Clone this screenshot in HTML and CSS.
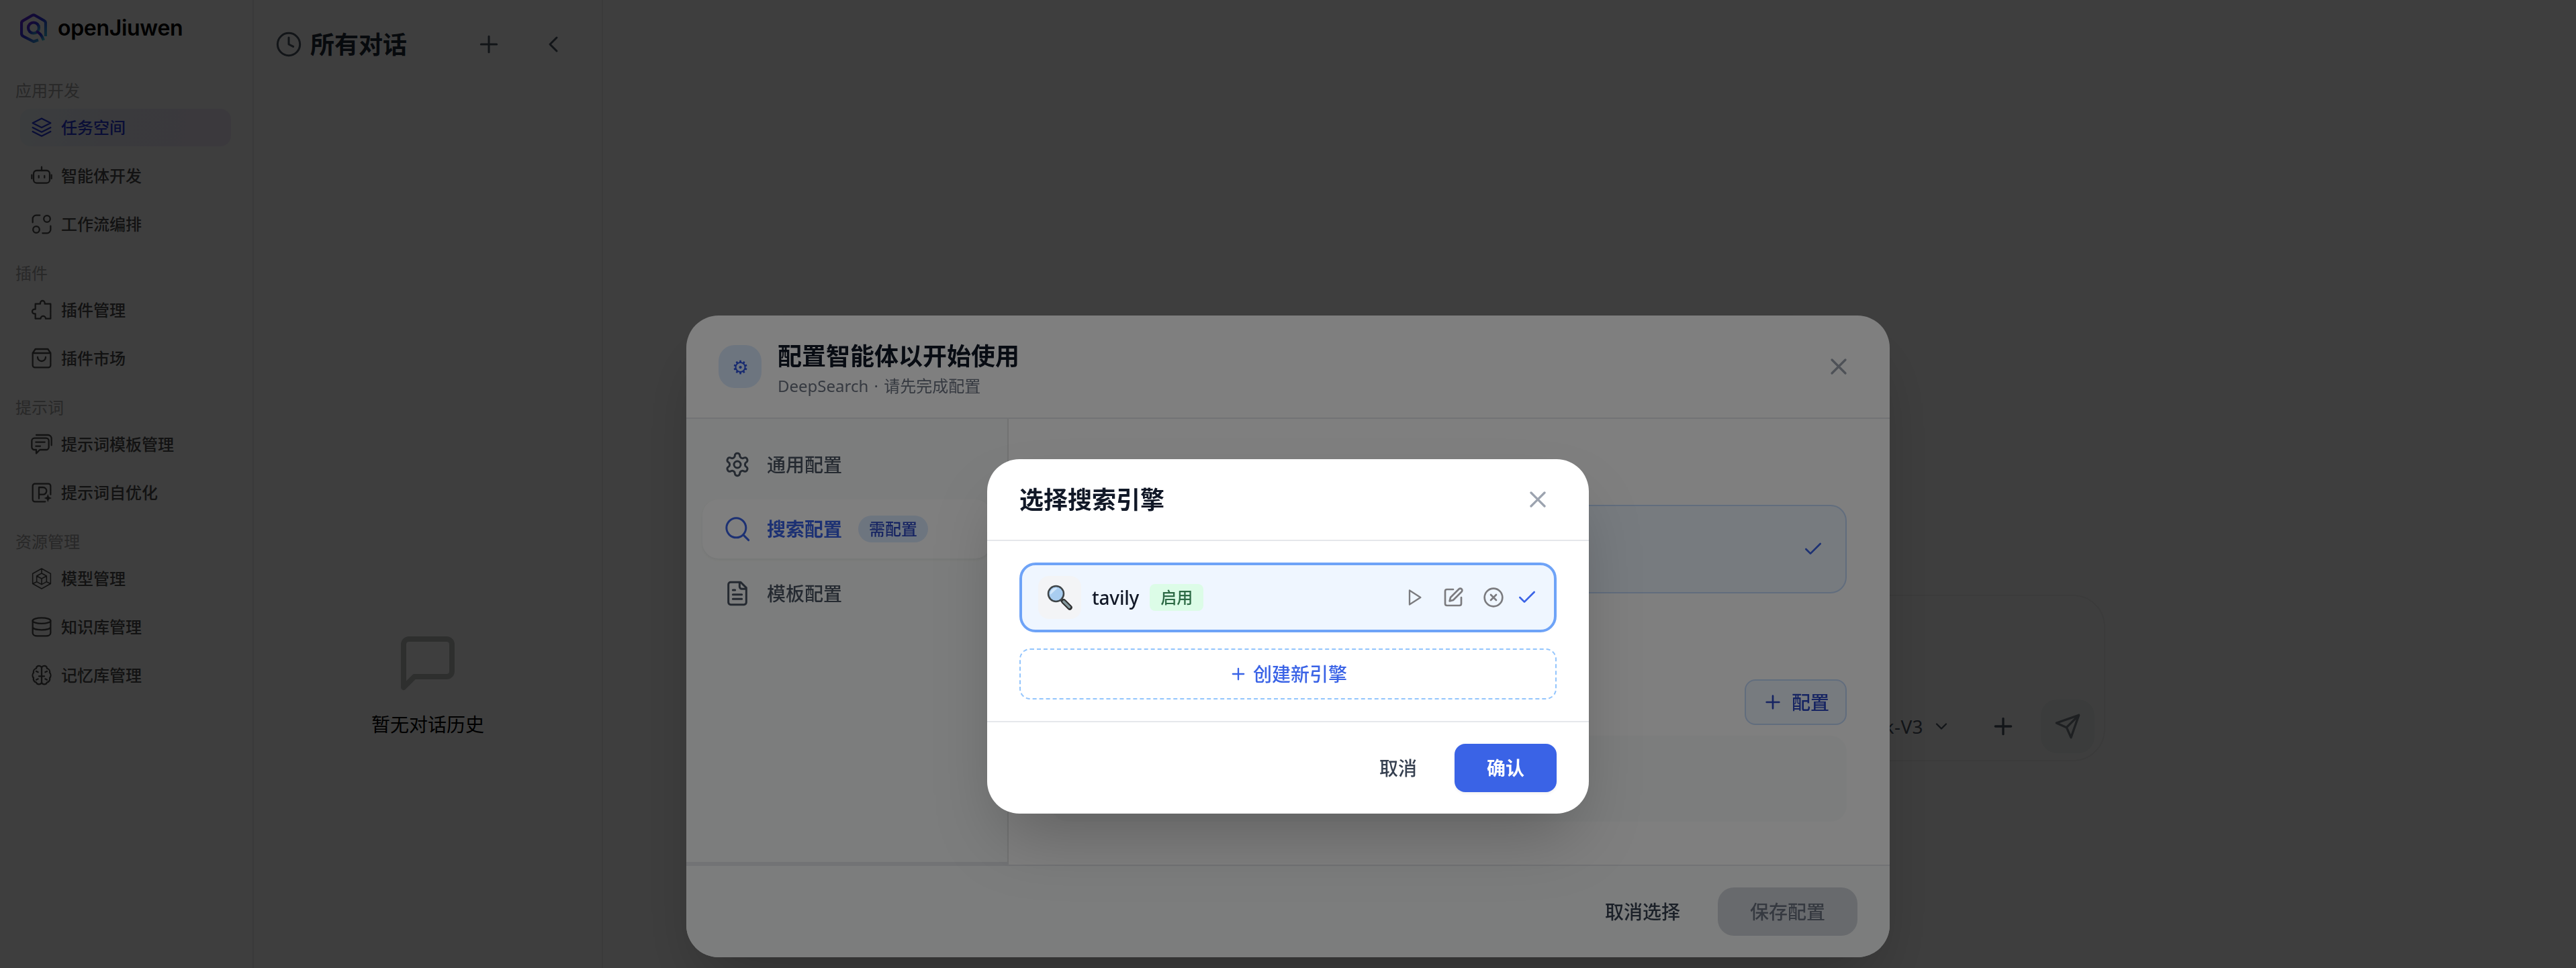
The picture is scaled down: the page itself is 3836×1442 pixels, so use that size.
FILE: index.html
```html
<!DOCTYPE html>
<html lang="zh-CN">
<head>
<meta charset="utf-8">
<title>openJiuwen</title>
<link rel="stylesheet" href="styles.css">
</head>
<body>
<svg class="sprite" aria-hidden="true">
  <defs>
    <linearGradient id="logo-fill" x1="0" y1="0" x2="1" y2="1">
      <stop offset="0" stop-color="#6a1fd8"/><stop offset=".5" stop-color="#2b35e0"/><stop offset="1" stop-color="#38d0d8"/>
    </linearGradient>
    <symbol id="plus" viewBox="0 0 24 24"><path d="M5 12h14M12 5v14"/></symbol>
    <symbol id="x" viewBox="0 0 24 24"><path d="M18 6 6 18M6 6l12 12"/></symbol>
    <symbol id="check" viewBox="0 0 24 24"><path d="M20 6 9 17l-5-5"/></symbol>
  </defs>
</svg>

<div class="app">
  <aside class="sidebar">
    <div class="brand">
      <svg class="logo" viewBox="0 0 40 44" fill="none" stroke="url(#logo-fill)" stroke-width="4.2" stroke-linejoin="round">
        <path d="M27 39.5 20 42 4.500 34Q2 32.500 2 30V14.500Q2 12 4.200 10.800L17.800 3Q20 1.800 22.200 3L35.800 10.800Q38 12 38 14.500V34"/>
        <circle cx="20" cy="21.500" r="8"/>
        <path d="M24 27Q31 29 35 40"/>
      </svg>
      <span class="brand-name">openJiuwen</span>
    </div>
    <nav class="menu">
      <h3 class="menu-label">应用开发</h3>
      <a class="menu-item active"><svg class="icon" viewBox="0 0 24 24"><path d="m12 1.800 10 5.200-10 5-10-5zM2 12l10 5 10-5M2 16.500l10 5 10-5"/></svg>任务空间</a>
      <a class="menu-item"><svg class="icon" viewBox="0 0 24 24"><rect x="3" y="6" width="18" height="14" rx="3.500"/><path d="M12 2v4M1 11v4M23 11v4M8.800 12v2M15.200 12v2"/></svg>智能体开发</a>
      <a class="menu-item"><svg class="icon" viewBox="0 0 24 24"><path d="M2 10V6a4 4 0 0 1 4-4h4M22 14v4a4 4 0 0 1-4 4h-5"/><circle cx="18" cy="6" r="3.600"/><circle cx="6" cy="18" r="3.600"/></svg>工作流编排</a>
      <h3 class="menu-label">插件</h3>
      <a class="menu-item"><svg class="icon" viewBox="0 0 24 24"><path d="M5 5h5.500V4a2.500 2.500 0 0 1 5 0v1H22v16.500h-5.500a2.800 2.800 0 0 0-5.600 0H5V16H4a2.500 2.500 0 0 1 0-5h1z"/></svg>插件管理</a>
      <a class="menu-item"><svg class="icon" viewBox="0 0 24 24"><path d="M5 1.500h14l3 4.500v13.500a2.500 2.500 0 0 1-2.500 2.500h-15A2.500 2.500 0 0 1 2 19.500V6zM2 6h20M7.500 10.500a4.500 4.500 0 0 0 9 0"/></svg>插件市场</a>
      <h3 class="menu-label">提示词</h3>
      <a class="menu-item"><svg class="icon" viewBox="0 0 24 24"><path d="M4 5h13a3 3 0 0 1 3 3v7a3 3 0 0 1-3 3h-7l-4 4v-4H4a3 3 0 0 1-3-3V8a3 3 0 0 1 3-3zM6 1.500h13A4 4 0 0 1 23 5.500V13M5.500 9.500h10M5.500 14h5"/></svg>提示词模板管理</a>
      <a class="menu-item"><svg class="icon" viewBox="0 0 24 24"><path d="M16 22H4.500A2.500 2.500 0 0 1 2 19.500v-15A2.500 2.500 0 0 1 4.500 2h15A2.500 2.500 0 0 1 22 4.500V14M9 18.500V6h4.500a4 4 0 0 1 0 8H9"/><path class="solid" d="m19 13.500 1.200 3.100 3 1.400-3 1.400-1.200 3.100-1.200-3.100-3-1.400 3-1.400z"/></svg>提示词自优化</a>
      <h3 class="menu-label">资源管理</h3>
      <a class="menu-item"><svg class="icon thin" viewBox="0 0 24 24"><path d="m12 .8 10 5.600v11.200L12 23.200 2 17.600V6.400zM12 6l5.500 3v6.500L12 18.500l-5.500-3V9zM12 12v6M6.500 9l5.500 3 5.500-3M12 1v5M2.500 17.500l4-2M21.500 17.500l-4-2"/></svg>模型管理</a>
      <a class="menu-item"><svg class="icon" viewBox="0 0 24 24"><ellipse cx="12" cy="5" rx="10" ry="3.200"/><path d="M2 5v13.500C2 20.500 4 22 7 22h10c3 0 5-1.500 5-3.500V5M2 12c0 2 4 3.200 10 3.200S22 14 22 12"/></svg>知识库管理</a>
      <a class="menu-item"><svg class="icon" viewBox="0 0 24 24"><path d="M12 4.500a3 3 0 0 0-6-.2A4 4 0 0 0 3 9a4.500 4.500 0 0 0 0 6 4 4 0 0 0 3 5 3.200 3.200 0 0 0 6 0zM12 4.500a3 3 0 0 1 6-.2A4 4 0 0 1 21 9a4.500 4.500 0 0 1 0 6 4 4 0 0 1-3 5 3.200 3.200 0 0 1-6 0M9 13h6M6 7.500l2 1M18 7.500l-2 1M6 17l2-1M18 17l-2-1"/></svg>记忆库管理</a>
    </nav>
  </aside>

  <section class="history">
    <header class="history-head">
      <svg class="icon i40" viewBox="0 0 24 24"><circle cx="12" cy="12" r="10"/><path d="M12 6v6l4 2"/></svg>
      <h2>所有对话</h2>
      <svg class="icon i40 new" viewBox="0 0 24 24"><use href="#plus"/></svg>
      <svg class="icon i40" viewBox="0 0 24 24"><path d="m15 18-6-6 6-6"/></svg>
    </header>
    <div class="history-empty">
      <svg class="icon i96" viewBox="0 0 24 24"><path d="M21 15a2 2 0 0 1-2 2H7l-4 4V5a2 2 0 0 1 2-2h14a2 2 0 0 1 2 2z"/></svg>
      <p>暂无对话历史</p>
    </div>
  </section>

  <main class="chat">
    <div class="composer">
      <span class="model">DeepSeek-V3<svg class="icon i28" viewBox="0 0 24 24"><path d="m6 9 6 6 6-6"/></svg></span>
      <svg class="icon i40" viewBox="0 0 24 24"><use href="#plus"/></svg>
      <span class="send"><svg class="icon i40" viewBox="0 0 24 24"><path d="m22 2-7 20-4-9-9-4zM22 2 11 13"/></svg></span>
    </div>
  </main>
</div>

<div class="overlay">
  <div class="dialog">
    <header class="dialog-head">
      <span class="dialog-icon">⚙</span>
      <div class="dialog-titles"><h2>配置智能体以开始使用</h2><p>DeepSearch · 请先完成配置</p></div>
      <svg class="icon i40" viewBox="0 0 24 24"><use href="#x"/></svg>
    </header>
    <div class="dialog-body">
      <nav class="tabs">
        <a class="tab"><svg class="icon i40" viewBox="0 0 24 24"><path d="M12.220 2h-.44a2 2 0 0 0-2 2v.18a2 2 0 0 1-1 1.730l-.43.25a2 2 0 0 1-2 0l-.15-.08a2 2 0 0 0-2.730.73l-.22.38a2 2 0 0 0 .73 2.730l.15.1a2 2 0 0 1 1 1.720v.51a2 2 0 0 1-1 1.740l-.15.09a2 2 0 0 0-.73 2.730l.22.38a2 2 0 0 0 2.730.73l.15-.08a2 2 0 0 1 2 0l.43.25a2 2 0 0 1 1 1.730V20a2 2 0 0 0 2 2h.44a2 2 0 0 0 2-2v-.18a2 2 0 0 1 1-1.730l.43-.25a2 2 0 0 1 2 0l.15.08a2 2 0 0 0 2.730-.73l.22-.39a2 2 0 0 0-.73-2.730l-.15-.08a2 2 0 0 1-1-1.740v-.5a2 2 0 0 1 1-1.740l.15-.09a2 2 0 0 0 .73-2.730l-.22-.38a2 2 0 0 0-2.730-.73l-.15.08a2 2 0 0 1-2 0l-.43-.25a2 2 0 0 1-1-1.730V4a2 2 0 0 0-2-2z"/><circle cx="12" cy="12" r="3"/></svg>通用配置</a>
        <a class="tab active"><svg class="icon i40" viewBox="0 0 24 24"><circle cx="11" cy="11" r="8.700"/><path d="m22 22-4.500-4.500"/></svg>搜索配置<span class="need">需配置</span></a>
        <a class="tab"><svg class="icon i40" viewBox="0 0 24 24"><path d="M15 2H6a2 2 0 0 0-2 2v16a2 2 0 0 0 2 2h12a2 2 0 0 0 2-2V7zM14 2v4a2 2 0 0 0 2 2h4M10 9H8M16 13H8M16 17H8"/></svg>模板配置</a>
      </nav>
      <div class="panel">
        <div class="choice"><svg class="icon i32" viewBox="0 0 24 24"><use href="#check"/></svg></div>
        <button class="config"><svg class="icon i32" viewBox="0 0 24 24"><use href="#plus"/></svg>配置</button>
        <div class="placeholder"></div>
      </div>
    </div>
    <footer class="dialog-foot"><button class="ghost">取消选择</button><button class="save">保存配置</button></footer>
  </div>
</div>

<div class="overlay">
  <div class="modal">
    <header class="modal-head"><h2>选择搜索引擎</h2><svg class="icon i40" viewBox="0 0 24 24"><use href="#x"/></svg></header>
    <div class="modal-body">
      <div class="engine">
        <span class="engine-icon"><svg viewBox="0 0 38 38"><path d="M21 22l4 4" stroke="#2f3a3d" stroke-width="5"/><path d="m25 25 9 9" stroke="#2f2f2f" stroke-width="7.500" stroke-linecap="round"/><path d="m25 25 8.500 8.500" stroke="#84989c" stroke-width="3.500" stroke-linecap="round"/><circle cx="13.500" cy="13.500" r="11.500" fill="#a9cdf0" stroke="#3f4548" stroke-width="2.500"/><path d="M5 15A9 9 0 0 1 16 5z" fill="#d3e7fa"/></svg></span>
        <span class="engine-name">tavily</span>
        <span class="enabled">启用</span>
        <span class="actions">
          <svg class="icon i28" viewBox="0 0 24 24"><path d="m6 3 14 9-14 9z"/></svg>
          <svg class="icon i32" viewBox="0 0 24 24"><path d="M12 3H5a2 2 0 0 0-2 2v14a2 2 0 0 0 2 2h14a2 2 0 0 0 2-2v-7M18.400 2.600a2.100 2.100 0 0 1 3 3L12 15l-4 1 1-4z"/></svg>
          <svg class="icon i32" viewBox="0 0 24 24"><circle cx="12" cy="12" r="10"/><path d="m15 9-6 6M9 9l6 6"/></svg>
        </span>
        <svg class="icon i32 picked" viewBox="0 0 24 24"><use href="#check"/></svg>
      </div>
      <button class="create"><svg class="icon i28" viewBox="0 0 24 24"><use href="#plus"/></svg>创建新引擎</button>
    </div>
    <footer class="modal-foot"><button class="ghost">取消</button><button class="confirm">确认</button></footer>
  </div>
</div>
</body>
</html>
```
FILE: styles.css
```css
* { box-sizing: border-box; margin: 0; }
body {
  height: 1442px;
  overflow: hidden;
  background: #f8f8f8;
  color: #111827;
  font: 28px/40px "Noto Sans", "Noto Sans CJK SC", sans-serif;
}
h2, h3 { font: inherit; }
button { border: 0; background: none; font: inherit; color: inherit; white-space: nowrap; }
.sprite { position: absolute; width: 0; height: 0; }

.icon {
  flex: none;
  width: 32px;
  height: 32px;
  fill: none;
  stroke: currentColor;
  stroke-width: 2;
  stroke-linecap: round;
  stroke-linejoin: round;
}
.i28 { width: 28px; height: 28px; }
.i32 { width: 32px; height: 32px; }
.i40 { width: 40px; height: 40px; }
.i96 { width: 96px; height: 96px; }

.app { display: flex; height: 1442px; }

.sidebar { width: 378px; border-right: 2px solid #e5e5e8; }
.brand { display: flex; align-items: center; gap: 16px; height: 84px; padding-left: 30px; }
.logo { width: 40px; height: 44px; }
.brand-name { font: 600 32px/40px Inter, sans-serif; letter-spacing: -.3px; color: #000; }
.menu { display: flex; flex-direction: column; gap: 16px; padding: 32px 32px 0 30px; font-size: 24px; }
.menu-label { height: 38px; margin: 0 0 -8px -7px; line-height: 38px; color: #a0a0a0; }
.menu-item + .menu-label { margin-top: 10px; }
.menu-item { display: flex; align-items: center; gap: 13px; height: 56px; padding-left: 16px; border-radius: 16px; color: #4a4a4a; font-weight: 500; }
.menu-item .icon { stroke-width: 1.700; }
.menu-item .thin { stroke-width: 1.200; }
.menu-item.active { color: #2436d8; background: linear-gradient(100deg, #eef6fa, #e8e8f6 50%, #efe6f4); }
.menu-item .solid { fill: currentColor; stroke: none; }

.history { display: flex; flex-direction: column; width: 520px; border-right: 2px solid #e8e8e8; }
.history-head { display: flex; align-items: center; gap: 12px; height: 132px; padding: 0 52px 0 32px; color: #4b5563; }
.history-head h2 { flex: 1; padding-top: 2px; font-size: 36px; font-weight: 700; color: #1f2937; }
.history-head .icon { stroke-width: 1.800; }
.history-head .new { margin-right: 44px; }
.history-empty { display: flex; flex: 1; flex-direction: column; align-items: center; gap: 23px; padding-top: 808px; color: #000; }
.history-empty .icon { color: #b8bcba; }

.chat { display: flex; flex: 1; align-items: flex-start; justify-content: center; padding-top: 886px; }
.composer { display: flex; align-items: flex-end; justify-content: flex-end; gap: 36px; width: 1536px; height: 248px; padding: 0 14px 10px; border: 2px solid #ececec; border-radius: 48px; background: #fafafa; color: #4b5563; }
.composer > .icon { margin-bottom: 20px; }
.model { display: flex; align-items: center; gap: 13px; margin-right: 22px; margin-bottom: 20px; letter-spacing: .4px; }
.send { display: flex; align-items: center; justify-content: center; width: 80px; height: 80px; border-radius: 24px; background: #edf3f0; color: #7b808a; }

.overlay { position: fixed; inset: 0; display: flex; justify-content: center; align-items: flex-start; background: rgba(0, 0, 0, .5); }

.dialog { display: flex; flex-direction: column; width: 1792px; height: 956px; margin-top: 470px; overflow: hidden; border-radius: 48px; background: #fff; box-shadow: 0 50px 100px -24px rgba(0, 0, 0, .25); }
.dialog-head { display: flex; align-items: center; gap: 24px; height: 154px; padding: 0 56px 0 48px; border-bottom: 2px solid #e5e7eb; color: #9ca3af; }
.dialog-icon { display: flex; align-items: center; justify-content: center; width: 64px; height: 64px; border-radius: 24px; background: #dbeafe; color: #2f55e0; }
.dialog-titles { flex: 1; padding-top: 2px; }
.dialog-titles h2 { font-size: 36px; line-height: 56px; font-weight: 700; color: #111827; }
.dialog-titles p { font-size: 24px; line-height: 32px; word-spacing: 2px; color: #6b7280; }
.dialog-body { display: flex; height: 664px; }
.tabs { display: flex; flex-direction: column; gap: 8px; width: 480px; padding: 24px 24px 0; border-right: 2px solid #e2e5e5; border-bottom: 4px solid #e5e7eb; background: #f9fbfa; }
.tab { display: flex; align-items: center; gap: 24px; height: 88px; padding-left: 32px; border-radius: 24px; color: #4b5563; font-weight: 500; }
.tab .icon { stroke-width: 1.800; }
.tab.active { background: #fff; color: #3a63e6; font-weight: 700; box-shadow: 0 2px 4px rgba(0, 0, 0, .06); }
.need { padding: 0 16px; border-radius: 20px; background: #dbeafe; font-size: 24px; font-weight: 500; color: #2c48c4; }
.panel { display: flex; flex: 1; flex-direction: column; align-items: flex-end; padding: 128px 64px 0; }
.choice { display: flex; align-items: center; justify-content: flex-end; width: 100%; height: 132px; padding-right: 32px; border: 2px solid #c3dafb; border-radius: 24px; background: #eff6ff; color: #3a63e6; }
.config { display: flex; align-items: center; gap: 12px; height: 68px; margin-top: 128px; padding: 0 24px; border: 2px solid #c3dafb; border-radius: 16px; background: #eff6ff; color: #2c48c4; font-weight: 500; }
.placeholder { width: 100%; height: 128px; margin-top: 16px; border-radius: 24px; background: #f9fbfa; }
.dialog-foot, .modal-foot { display: flex; align-items: center; justify-content: flex-end; gap: 24px; padding: 32px 48px; border-top: 2px solid #e5e7eb; }
.dialog-foot { background: #f9fbfa; }
.ghost { height: 72px; padding: 0 32px; color: #374151; font-weight: 500; }
.save { height: 72px; padding: 0 48px; border-radius: 24px; background: #d1d5db; color: #6b7280; font-weight: 500; }

.modal { width: 896px; height: 528px; margin-top: 684px; border-radius: 48px; background: #fff; box-shadow: 0 50px 100px -24px rgba(0, 0, 0, .25); }
.modal-head { display: flex; align-items: center; justify-content: space-between; height: 122px; padding: 0 56px 0 48px; border-bottom: 2px solid #e5e7eb; color: #9ca3af; }
.modal-head h2 { padding-top: 2px; font-size: 36px; font-weight: 700; color: #111827; }
.modal-body { display: flex; flex-direction: column; gap: 24px; padding: 32px 48px; }
.engine { display: flex; align-items: center; gap: 16px; height: 104px; padding: 0 24px; border: 4px solid #6ea3f7; border-radius: 24px; background: #eff6ff; }
.engine-icon { display: flex; align-items: center; justify-content: center; width: 64px; height: 64px; border-radius: 16px; background: #f3f4f6; }
.engine-icon svg { width: 38px; height: 38px; fill: none; }
.engine-name { font-weight: 500; letter-spacing: -.2px; }
.enabled { padding: 0 16px; border-radius: 8px; background: #dcfce7; color: #2d6a45; font-size: 24px; font-weight: 500; }
.actions { display: flex; align-items: center; gap: 28px; margin-left: auto; color: #7b7b7f; }
.picked { margin-left: 2px; color: #3a63e6; }
.create { display: flex; align-items: center; justify-content: center; gap: 8px; height: 76px; border: 2px dashed #93c5fd; border-radius: 16px; color: #3a63e6; font-weight: 500; }
.confirm { height: 72px; padding: 0 48px; border-radius: 16px; background: #3a63e6; color: #fff; font-weight: 700; box-shadow: 0 2px 4px rgba(0, 0, 0, .06); }
```
